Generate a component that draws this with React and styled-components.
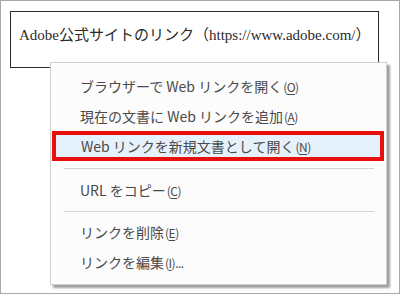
import React from 'react'
import styled, { createGlobalStyle } from 'styled-components'

const Global = createGlobalStyle`
  html, body {
    margin: 0;
    padding: 0;
    background: #fff;
  }
`

const Frame = styled.div`
  position: relative;
  box-sizing: border-box;
  width: 400px;
  height: 294px;
  border: 1px solid #a8a8a8;
  padding: 10px 0 0 9px;
  background: #fff;
  overflow: hidden;
`

const LinkBox = styled.div`
  box-sizing: border-box;
  width: 369px;
  height: 57px;
  border: 1px solid #2a2a2a;
  padding: 13px 0 0 8px;
  font-family: "Liberation Serif", "Noto Sans CJK JP", serif;
  font-size: 15px;
  line-height: 20px;
  color: #2a2a2a;
  white-space: nowrap;
`

const Menu = styled.div`
  position: absolute;
  left: 49px;
  top: 61px;
  box-sizing: border-box;
  width: 337px;
  height: 223px;
  border: 1px solid #cfcfcf;
  background: #fcfcfc;
  padding: 8px 0 7px;
  box-shadow: 3px 3px 2px rgba(0, 0, 0, 0.38);
  font-family: "Noto Sans CJK JP", "Noto Sans", sans-serif;
  font-size: 14px;
  color: #4a4a4a;
`

const Item = styled.div`
  box-sizing: border-box;
  height: 30px;
  display: flex;
  align-items: center;
  white-space: nowrap;
  padding-left: ${p => (p.$active ? '25px' : '29px')};
  margin: ${p => (p.$active ? '0 2px 0 1px' : '0')};
  border: ${p => (p.$active ? '4px solid #e8100c' : 'none')};
  background: ${p => (p.$active ? '#e5f1fb' : 'transparent')};
`

const Key = styled.span`
  font-size: 12px;
  letter-spacing: -0.5px;
  margin-left: 1px;
  u {
    text-underline-offset: 2px;
  }
`

const Separator = styled.div`
  height: 1px;
  background: #d4d4d4;
  margin: ${p => p.$m};
`

const entries = [
  { label: 'ブラウザーで Web リンクを開く', key: 'O' },
  { label: '現在の文書に Web リンクを追加', key: 'A' },
  { label: 'Web リンクを新規文書として開く', key: 'N', active: true },
  { sep: '7px 12px 6px 13px' },
  { label: 'URL をコピー', key: 'C' },
  { sep: '6px 12px 5px 13px' },
  { label: 'リンクを削除', key: 'E' },
  { label: 'リンクを編集', key: 'I', tail: '...' },
]

export default function App() {
  return (
    <>
      <Global />
      <Frame>
        <LinkBox>Adobe公式サイトのリンク（https://www.adobe.com/）</LinkBox>
        <Menu>
          {entries.map((e, i) =>
            e.sep ? (
              <Separator key={i} $m={e.sep} />
            ) : (
              <Item key={i} $active={e.active}>
                {e.label}
                <Key>
                  (<u>{e.key}</u>){e.tail}
                </Key>
              </Item>
            )
          )}
        </Menu>
      </Frame>
    </>
  )
}
